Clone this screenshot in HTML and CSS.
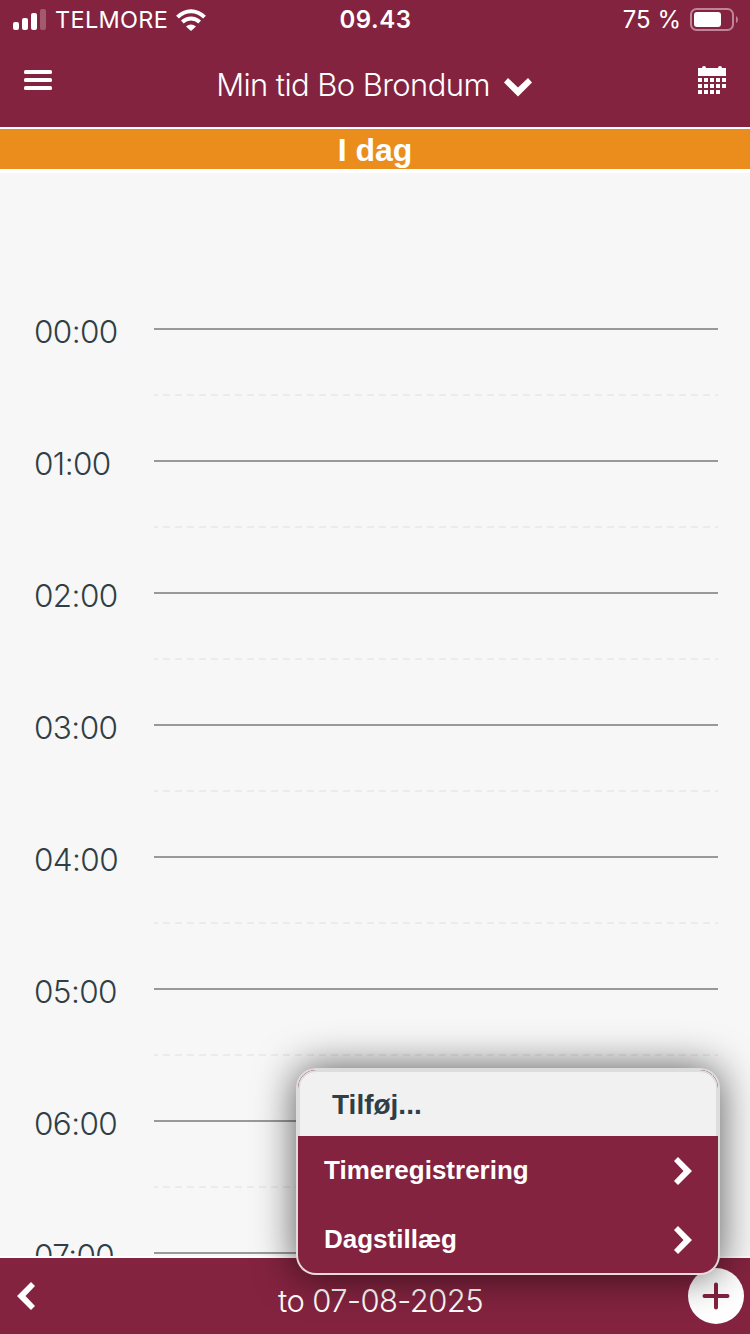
FILE: index.html
```html
<!DOCTYPE html>
<html lang="da">
<head>
  <meta charset="UTF-8">
  <title>Min tid</title>
  <meta name="viewport" content="width=device-width, initial-scale=1.0">
  <link rel="stylesheet" href="styles.css">
</head>
<body>
  <header class="header">
    <div class="statusbar">
      <div class="carrier">
        <svg class="signal" width="34" height="22" viewBox="0 0 34 22" fill="#fff">
          <rect x="0" y="13" width="6" height="8" rx="2"/>
          <rect x="9" y="9" width="6" height="12" rx="2"/>
          <rect x="18" y="4" width="6" height="17" rx="2"/>
          <rect x="27" y="0" width="6" height="21" rx="2" opacity=".25"/>
        </svg>
        <span class="carrier-name">TELMORE</span>
        <svg class="wifi" width="30" height="22" viewBox="0 0 30 22" fill="none" stroke="#fff" stroke-width="4">
          <path d="M1.5 8.2Q7.5 2.2 15 2.2T28.500 8.2"/>
          <path d="M6.300 13Q10.300 9.600 15 9.600T23.700 13"/>
          <path d="M15 22L10 17.500Q15 13.400 20 17.500Z" fill="#fff" stroke="none"/>
        </svg>
      </div>
      <div class="clock">09.43</div>
      <div class="power">
        <span class="percent">75 %</span>
        <svg width="48" height="24" viewBox="0 0 48 24">
          <rect x="1" y="1" width="42" height="21" rx="5.500" fill="none" stroke="#c0849a" stroke-width="2"/>
          <rect x="4" y="4" width="27" height="15" rx="3" fill="#fff"/>
          <path d="M46 8q2 1 2 3.500t-2 3.500z" fill="#c0849a"/>
        </svg>
      </div>
    </div>
    <div class="titlebar">
      <svg class="menu-icon" width="28" height="20" viewBox="0 0 28 20" fill="#fff">
        <rect width="28" height="4" rx="1.500"/>
        <rect y="8" width="28" height="4" rx="1.500"/>
        <rect y="16" width="28" height="4" rx="1.500"/>
      </svg>
      <div class="title">
        <span class="title-text">Min tid Bo Brondum</span>
        <svg class="arrow" width="28" height="19" viewBox="0 0 28 19" fill="#fff"><path d="M4 0L14 9.500 24 0 28 4.500 14 18.500 0 4.500Z"/></svg>
      </div>
      <svg class="calendar-icon" width="28" height="28" viewBox="0 0 28 28" fill="#fff">
        <path d="M0 2H4Q4 0 6 0T8 2H20Q20 0 22 0T24 2H28V10H0Z"/>
        <path d="M0 12h4v4H0zM6 12h4v4H6zM12 12h4v4h-4zM18 12h4v4h-4zM24 12h4v4h-4z"/>
        <path d="M0 18h4v4H0zM6 18h4v4H6zM12 18h4v4h-4zM18 18h4v4h-4zM24 18h4v4h-4z"/>
        <path d="M0 24h4v4H0zM6 24h4v4H6zM12 24h4v4h-4zM18 24h4v4h-4z"/>
      </svg>
    </div>
  </header>

  <div class="today"><span>I dag</span></div>

  <main class="day">
    <div class="hour"><span class="time">00:00</span><div class="slot"></div></div>
    <div class="hour"><span class="time">01:00</span><div class="slot"></div></div>
    <div class="hour"><span class="time">02:00</span><div class="slot"></div></div>
    <div class="hour"><span class="time">03:00</span><div class="slot"></div></div>
    <div class="hour"><span class="time">04:00</span><div class="slot"></div></div>
    <div class="hour"><span class="time">05:00</span><div class="slot"></div></div>
    <div class="hour"><span class="time">06:00</span><div class="slot"></div></div>
    <div class="hour"><span class="time">07:00</span><div class="slot"></div></div>
  </main>

  <footer class="footer">
    <svg class="prev" width="18" height="28" viewBox="0 0 18 28" fill="#fff"><path d="M14 0L18 4 8.500 14 18 24 14 28 0 14Z"/></svg>
    <span class="date">to 07-08-2025</span>
    <div class="add">
      <svg width="28" height="28" viewBox="0 0 28 28" stroke="#83233f" stroke-width="4" stroke-linecap="round"><path d="M14 2.500V25.500M2.500 14H25.500"/></svg>
    </div>
  </footer>

  <div class="popup">
    <div class="popup-title"><span>Tilføj...</span></div>
    <div class="popup-item">
      <span class="item-time">Timeregistrering</span>
      <svg width="18" height="28" viewBox="0 0 18 28" fill="#fff"><path d="M4 0L0 4 9.500 14 0 24 4 28 18 14Z"/></svg>
    </div>
    <div class="popup-item">
      <span class="item-day">Dagstillæg</span>
      <svg width="18" height="28" viewBox="0 0 18 28" fill="#fff"><path d="M4 0L0 4 9.500 14 0 24 4 28 18 14Z"/></svg>
    </div>
  </div>
</body>
</html>
```
FILE: styles.css
```css
* {
  box-sizing: border-box;
}
body {
  margin: 0;
  height: 1334px;
  display: flex;
  flex-direction: column;
  overflow: hidden;
  background: #fff;
  color: #fff;
  font-family: "Liberation Sans", Arial, sans-serif;
}
svg {
  display: block;
  flex: none;
}
span {
  white-space: nowrap;
}
.header {
  height: 127px;
  flex: none;
  background: #83233f;
}
.statusbar {
  height: 40px;
  display: grid;
  grid-template-columns: 1fr auto 1fr;
  align-items: center;
  padding: 0 12px 0 13px;
  font-family: Inter, sans-serif;
  font-size: 24px;
  line-height: 40px;
}
.carrier, .power {
  display: flex;
  align-items: center;
}
.carrier-name {
  margin-left: 8px;
  width: 112px;
  font-size: 23.5px;
  letter-spacing: 0.3px;
}
.wifi {
  margin-left: 9px;
}
.clock {
  font-weight: 600;
  letter-spacing: 0.5px;
}
.power {
  justify-content: flex-end;
}
.percent {
  margin-right: 9px;
}
.titlebar {
  height: 87px;
  display: flex;
  align-items: flex-start;
  justify-content: space-between;
  padding: 26px 24px 0;
}
.menu-icon {
  margin-top: 4px;
}
.title {
  display: flex;
  align-items: flex-start;
  margin-right: 2px;
}
.title-text {
  margin-top: -1px;
  font: 300 31px/40px Inter, sans-serif;
  letter-spacing: -0.6px;
}
.arrow {
  margin: 12px 0 0 14px;
}
.today {
  height: 40px;
  flex: none;
  margin: 2px 0 4px;
  background: #ea8d1d;
  text-align: center;
  font-size: 32px;
  font-weight: bold;
  line-height: 43px;
}
.day {
  height: 1083px;
  flex: none;
  padding-top: 155px;
  overflow: hidden;
  background: #f7f7f7;
}
.hour {
  height: 132px;
  display: flex;
  padding: 0 32px 0 34px;
}
.time {
  width: 120px;
  margin-top: -16px;
  color: #303e46;
  font: 300 31.5px/40px Inter, sans-serif;
  letter-spacing: -0.6px;
}
.slot {
  flex: 1;
  border-top: 2px solid #999;
  background: repeating-linear-gradient(90deg, #ebebeb 0 4px, transparent 4px 9px, #ebebeb 9px 12px) 0 64px / 100% 2px no-repeat;
}
.footer {
  height: 76px;
  flex: none;
  display: flex;
  align-items: flex-start;
  justify-content: space-between;
  margin-top: 2px;
  padding: 10px 6px 0 17px;
  background: #83233f;
}
.prev {
  margin-top: 14px;
}
.date {
  margin: 13px 0 0 38px;
  font: 300 31px/40px Inter, sans-serif;
  letter-spacing: -0.6px;
}
.add {
  width: 56px;
  height: 56px;
  display: flex;
  align-items: center;
  justify-content: center;
  border-radius: 50%;
  background: #fff;
}
/* add menu floats over the calendar and the footer */
.popup {
  position: absolute;
  right: 30px;
  bottom: 59px;
  width: 424px;
  height: 207px;
  overflow: hidden;
  border: 2px solid #ddd;
  border-bottom-color: #ecd9df;
  border-radius: 20px;
  background: #83233f;
  box-shadow: 0 0 40px rgba(0, 0, 0, 0.65);
}
.popup-title {
  height: 66px;
  padding-left: 32px;
  border: 2px solid #ddd;
  border-bottom: 0;
  border-radius: 18px 18px 0 0;
  background: #f1f1f1;
  color: #303e46;
  font-size: 28px;
  font-weight: bold;
  line-height: 66px;
}
.popup-item {
  height: 69px;
  display: flex;
  align-items: center;
  justify-content: space-between;
  padding: 0 26px;
  font-size: 26px;
  font-weight: bold;
}
```
